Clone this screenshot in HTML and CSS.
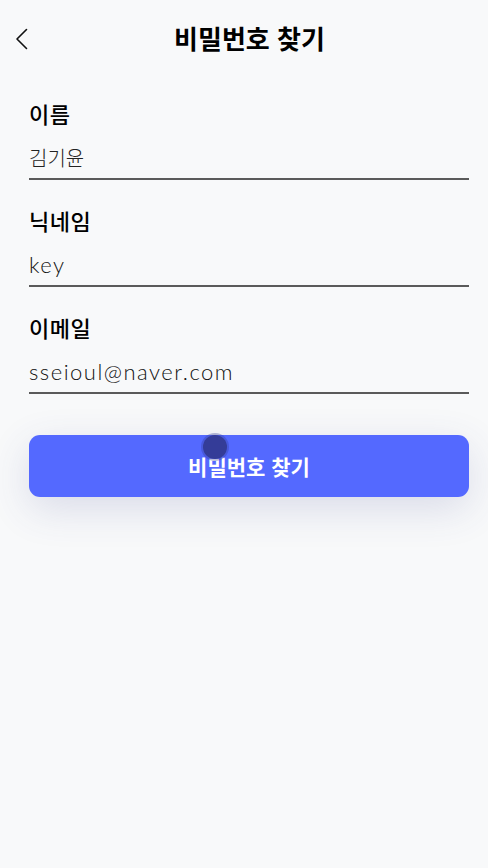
FILE: index.html
```html
<!DOCTYPE html>
<html lang="ko">
<head>
<meta charset="utf-8">
<link rel="stylesheet" href="styles.css">
</head>
<body>
<div class="page">
  <header class="topbar">
    <button class="back" aria-label="뒤로">
      <svg width="14" height="22" viewBox="0 0 14 22"><path d="M11.5 1.5 L2 11 L11.5 20.5" fill="none" stroke="#111" stroke-width="1.6" stroke-linecap="round" stroke-linejoin="round"/></svg>
    </button>
    <h1 class="title">비밀번호 찾기</h1>
  </header>
  <form class="form">
    <label class="field">
      <span class="label">이름</span>
      <span class="value">김기윤</span>
    </label>
    <label class="field">
      <span class="label">닉네임</span>
      <span class="value latin">key</span>
    </label>
    <label class="field">
      <span class="label">이메일</span>
      <span class="value latin">sseioul@naver.com</span>
    </label>
    <div class="btn-wrap">
      <button type="button" class="submit">비밀번호 찾기</button>
      <span class="touch"></span>
    </div>
  </form>
</div>
</body>
</html>
```
FILE: styles.css
```css
* { box-sizing: border-box; }
html, body { margin: 0; padding: 0; }
body {
  background: #f8f9fa;
  font-family: "Noto Sans CJK KR", "Noto Sans", sans-serif;
  color: #111;
  width: 488px;
  height: 868px;
  overflow: hidden;
}
.page { padding: 0 19px 0 29px; }
.topbar {
  height: 78px;
  display: flex;
  align-items: center;
  justify-content: center;
  position: relative;
  margin: 0 -19px 0 -29px;
  padding-left: 11px;
  padding-bottom: 4px;
}
.back {
  position: absolute;
  left: 14px;
  top: 28px;
  background: none;
  border: 0;
  padding: 0;
  width: 16px;
  height: 22px;
}
.title {
  margin: 0;
  font-size: 26px;
  font-weight: 700;
  color: #000;
}
.form { display: flex; flex-direction: column; padding-top: 20px; }
.field {
  display: flex;
  flex-direction: column;
  border-bottom: 2px solid #5a5a5a;
  margin-bottom: 25px;
  height: 82px;
}
.label {
  font-size: 22px;
  font-weight: 500;
  line-height: 30px;
  letter-spacing: 0.5px;
  color: #000;
}
.value {
  margin-top: 16px;
  font-size: 20px;
  font-weight: 300;
  line-height: 28px;
  color: #222;
}
.value.latin {
  font-family: "Lato", "Noto Sans", sans-serif;
  font-weight: 300;
  font-size: 22px;
  color: #111;
  letter-spacing: 1.5px;
}
.btn-wrap { position: relative; margin-top: 16px; }
.submit {
  width: 440px;
  height: 62px;
  border: 0;
  border-radius: 11px;
  background: #5469ff;
  color: #fff;
  font-family: "Noto Sans CJK KR", sans-serif;
  font-size: 21px;
  font-weight: 700;
  box-shadow: 0 12px 40px rgba(60, 70, 140, 0.16);
}
.touch {
  position: absolute;
  left: 174px;
  top: 0px;
  width: 24px;
  height: 24px;
  border-radius: 50%;
  background: #343c98;
  box-shadow: 0 0 0 2px rgba(52, 60, 152, 0.35);
}
```
